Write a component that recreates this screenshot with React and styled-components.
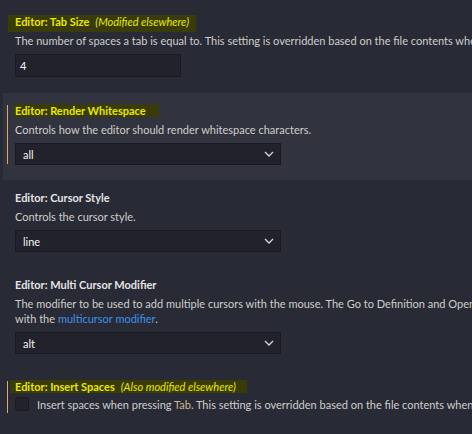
import React from 'react';
import styled, { createGlobalStyle } from 'styled-components';

const GlobalStyle = createGlobalStyle`
  body {
    margin: 0;
    background: #282a36;
    font-family: Lato, "Noto Sans", sans-serif;
    font-size: 11px;
    color: #d4d4cf;
  }
`;

const Page = styled.div`
  width: 472px;
  height: 434px;
  overflow: hidden;
`;

const Item = styled.div`
  position: relative;
  margin-left: 3px;
  padding: ${p => (p.$first ? '13px 0 16px 12px' : '9px 0 15px 12px')};
  background: ${p => (p.$focused ? '#31333f' : 'transparent')};
  white-space: nowrap;

  &::before {
    content: '';
    display: ${p => (p.$bar ? 'block' : 'none')};
    position: absolute;
    left: 4px;
    top: 12px;
    height: ${p => p.$bar || 0}px;
    width: 1px;
    background: #e2a765;
  }
`;

const Title = styled.div`
  height: 18px;
  line-height: 18px;
  font-weight: 700;
  color: ${p => (p.$marked ? '#e9e900' : '#e4e4e4')};
`;

const Marker = styled.span`
  display: inline-block;
  background: #3a3b0a;
  padding: ${p => p.$top || 0}px ${p => p.$tail}px ${p => p.$bottom || 0}px ${p => p.$lead}px;
  margin-left: -${p => p.$lead}px;
  line-height: 13px;
`;

const Note = styled.span`
  font-style: italic;
  font-weight: 400;
  margin-left: 6px;
`;

const Desc = styled.div`
  line-height: 15px;
  padding: 2px 0 1px;
  color: #cfcfca;
`;

const Link = styled.span`
  color: #3d91ea;
`;

const Code = styled.span`
  color: #d2b587;
`;

const TextInput = styled.div`
  margin-top: 5px;
  width: 166px;
  height: 23px;
  box-sizing: border-box;
  background: #21222c;
  border: 1px solid #191a21;
  padding: 0 4px;
  line-height: 21px;
  color: #f4f4f4;
`;

const Select = styled.div`
  margin-top: 5px;
  width: 266px;
  height: 22px;
  box-sizing: border-box;
  background: #21222c;
  border: 1px solid #191a21;
  padding: 0 6px 0 7px;
  display: flex;
  align-items: center;
  justify-content: space-between;
  color: #f4f4f4;
`;

const Chevron = () => (
  <svg width="10" height="6" viewBox="0 0 10 6">
    <path d="M1 1l4 4 4-4" fill="none" stroke="#d8d8d8" strokeWidth="1.3" />
  </svg>
);

const CheckRow = styled.div`
  display: flex;
  align-items: center;
  gap: 8px;
  margin-top: 1px;
  color: #cfcfca;
`;

const Box = styled.div`
  width: 14px;
  height: 14px;
  flex: none;
  box-sizing: border-box;
  background: #21222c;
  border: 1px solid #191a21;
  border-radius: 3px;
`;

export default function App() {
  return (
    <Page>
      <GlobalStyle />
      <Item $first>
        <Title $marked>
          <Marker $lead={7} $tail={7} $bottom={4}>
            Editor: Tab Size<Note>(Modified elsewhere)</Note>
          </Marker>
        </Title>
        <Desc>The number of spaces a tab is equal to. This setting is overridden based on the file contents when Editor: Detect Indentation is on.</Desc>
        <TextInput>4</TextInput>
      </Item>

      <Item $focused $bar={59}>
        <Title $marked>
          <Marker $lead={1} $tail={13}>Editor: Render Whitespace</Marker>
        </Title>
        <Desc>Controls how the editor should render whitespace characters.</Desc>
        <Select>
          all
          <Chevron />
        </Select>
      </Item>

      <Item>
        <Title>Editor: Cursor Style</Title>
        <Desc>Controls the cursor style.</Desc>
        <Select>
          line
          <Chevron />
        </Select>
      </Item>

      <Item>
        <Title>Editor: Multi Cursor Modifier</Title>
        <Desc>
          The modifier to be used to add multiple cursors with the mouse. The Go to Definition and Open Link mouse gestures will adapt such that they do not conflict
          <br />
          with the <Link>multicursor modifier</Link>.
        </Desc>
        <Select>
          alt
          <Chevron />
        </Select>
      </Item>

      <Item $bar={32}>
        <Title $marked>
          <Marker $lead={5} $tail={11}>
            Editor: Insert Spaces<Note>(Also modified elsewhere)</Note>
          </Marker>
        </Title>
        <CheckRow>
          <Box />
          <span>
            Insert spaces when pressing <Code>Tab</Code>. This setting is overridden based on the file contents when Editor: Detect Indentation is on.
          </span>
        </CheckRow>
      </Item>
    </Page>
  );
}
